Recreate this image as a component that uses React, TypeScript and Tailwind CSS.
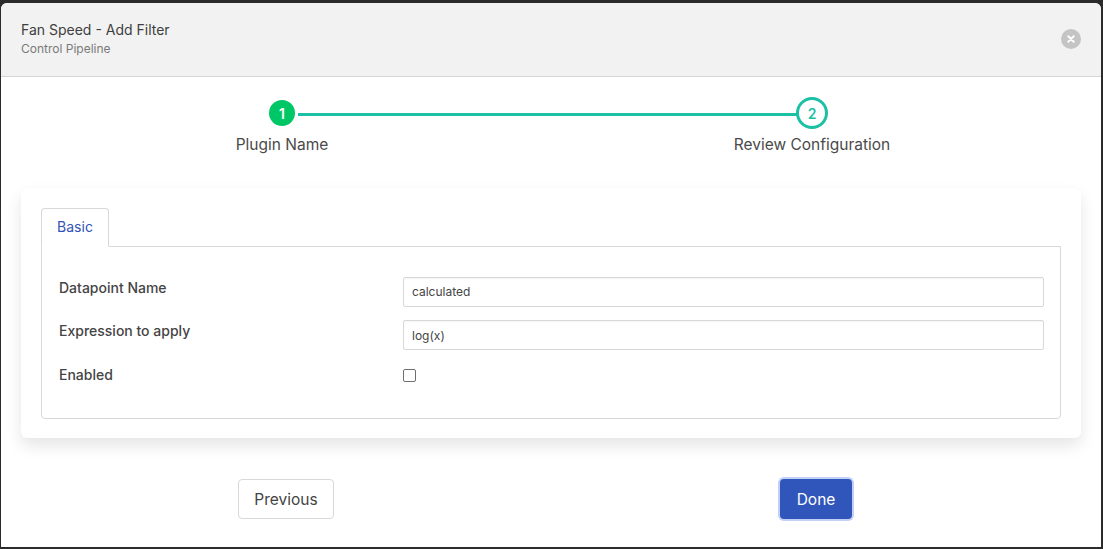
import React from "react";

function Field({ label, value, inputPad }: { label: string; value: string; inputPad: string }) {
  return (
    <div className="flex items-start h-[30px] mb-[13px]">
      <label className="w-[344px] text-[14px] leading-[22px] font-medium text-[#444444]">{label}</label>
      <input
        readOnly
        value={value}
        className={`w-[641px] h-[30px] border border-[#d8d8d8] rounded-[2px] px-2 ${inputPad} text-[12px] text-[#444444] bg-white outline-none shadow-[inset_0_1px_1px_rgba(10,10,10,0.04)]`}
      />
    </div>
  );
}

export default function App() {
  return (
    <div
      className="w-[1103px] h-[549px] bg-[#2b2b2b] pt-[3px] pl-[1px] pr-[2px] pb-[2px] overflow-hidden"
      style={{ fontFamily: "Inter, 'Liberation Sans', sans-serif" }}
    >
      <div className="w-[1100px] h-[544px] bg-white rounded-t-[6px] flex flex-col overflow-hidden">
        <header className="h-[74px] shrink-0 bg-[#f2f2f2] border-b border-[#d5d5d5] flex items-center justify-between pl-[20px] pr-[20px]">
          <div className="-mt-[2px]">
            <div className="text-[14px] leading-[20px] text-[#3f3f3f]">Fan Speed - Add Filter</div>
            <div className="text-[12px] leading-[18px] text-[#7a7a7a]">Control Pipeline</div>
          </div>
          <button className="w-5 h-5 rounded-full bg-[#c4c4c4] flex items-center justify-center -mt-[1px]">
            <svg width="10" height="10" viewBox="0 0 10 10" fill="none">
              <path d="M2.3 2.3l5.4 5.4M7.7 2.3L2.3 7.7" stroke="#fff" strokeWidth="2" strokeLinecap="round" />
            </svg>
          </button>
        </header>

        <div className="relative ml-[16px] w-[1060px] grid grid-cols-2 h-[111px] pt-[20px]">
          <div className="absolute left-[281px] top-[36px] w-[499px] h-[3px] bg-[#1bc0a5]" />
          <div className="flex flex-col items-center">
            <div className="relative w-[26px] h-[26px] mt-[3px] rounded-full bg-[#00c766] text-white text-[14px] font-semibold flex items-center justify-center">
              1
            </div>
            <div className="mt-[7px] text-[15.5px] leading-[24px] text-[#4a4a4a]">Plugin Name</div>
          </div>
          <div className="flex flex-col items-center">
            <div className="relative w-[32px] h-[32px] rounded-full border-[3px] border-[#1bc0a5] bg-white text-[#1bc0a5] text-[14px] font-semibold flex items-center justify-center">
              2
            </div>
            <div className="mt-[4px] text-[15.5px] leading-[24px] text-[#4a4a4a]">Review Configuration</div>
          </div>
        </div>

        <section className="ml-[20px] w-[1060px] h-[250px] shrink-0 bg-white rounded-[6px] shadow-[0_8px_16px_rgba(10,10,10,0.1),0_0_1px_rgba(10,10,10,0.04)] p-[20px]">
          <div className="flex h-[38px]">
            <div className="relative z-10 w-[68px] h-[39px] pb-[2px] border border-[#d8d8d8] border-b-white rounded-t-[4px] bg-white text-[#3253b8] text-[14px] flex items-center justify-center font-normal">
              Basic
            </div>
          </div>
          <div className="w-[1020px] h-[173px] border border-[#d8d8d8] rounded-b-[4px] pt-[30px] pl-[17px]">
            <Field label="Datapoint Name" value="calculated" inputPad="pb-[2px]" />
            <Field label="Expression to apply" value="log(x)" inputPad="pt-[1px]" />
            <div className="flex items-start pt-[1px]">
              <label className="w-[344px] text-[14px] leading-[22px] font-medium text-[#444444]">Enabled</label>
              <input
                type="checkbox"
                readOnly
                className="w-[13px] h-[13px] mt-[5px] appearance-none border border-[#6f6f6f] rounded-[2px] bg-white"
              />
            </div>
          </div>
        </section>

        <div className="flex h-[81px] items-start pt-[41px]">
          <button className="ml-[237px] w-[96px] h-[40px] pt-[1px] border border-[#d8d8d8] rounded-[4px] bg-white text-[15.5px] text-[#444444]">
            Previous
          </button>
          <button className="ml-[446px] w-[72px] h-[40px] pt-[1px] rounded-[4px] bg-[#3056bb] text-[15.5px] text-white shadow-[0_0_0_2px_rgba(50,100,220,0.3)]">
            Done
          </button>
        </div>
      </div>
    </div>
  );
}
